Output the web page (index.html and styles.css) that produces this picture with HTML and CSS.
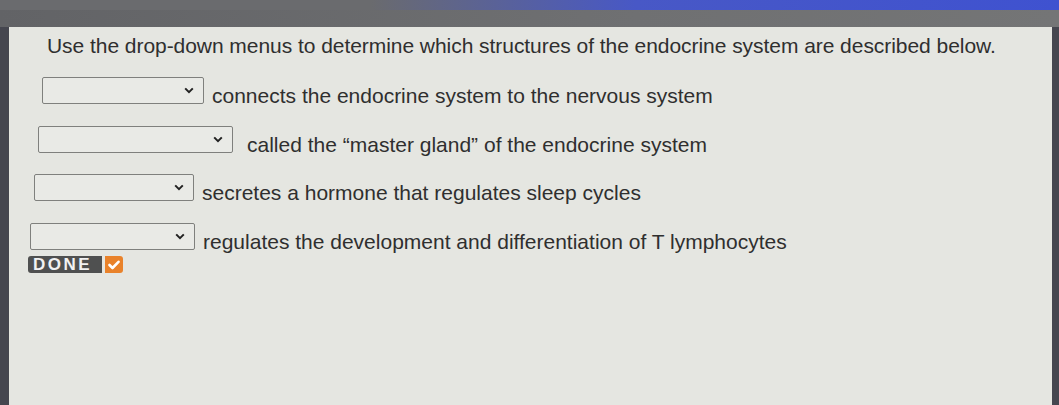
FILE: index.html
```html
<!DOCTYPE html>
<html lang="en">
<head>
    <meta charset="UTF-8">
    <meta name="viewport" content="width=device-width, initial-scale=1.0">
    <title>Endocrine System</title>
    <link rel="stylesheet" href="styles.css">
</head>
<body>
<div class="topbar"></div>
<div class="subbar"></div>
<div class="panel">
    <p class="intro">Use the drop-down menus to determine which structures of the endocrine system are described below.</p>

    <div class="row r1">
        <select class="pick w1"><option></option></select>
        <span>connects the endocrine system to the nervous system</span>
    </div>
    <div class="row r2">
        <select class="pick w2"><option></option></select>
        <span>called the “master gland” of the endocrine system</span>
    </div>
    <div class="row r3">
        <select class="pick w3"><option></option></select>
        <span>secretes a hormone that regulates sleep cycles</span>
    </div>
    <div class="row r4">
        <select class="pick w4"><option></option></select>
        <span>regulates the development and differentiation of T lymphocytes</span>
    </div>

    <div class="done">
        <span class="done-text">DONE</span>
        <span class="done-check">
            <svg width="12" height="10" viewBox="0 0 12 10"><path d="M1.5 5 L4.5 8 L10.5 1.8" fill="none" stroke="#fff" stroke-width="2.6" stroke-linecap="round" stroke-linejoin="round"/></svg>
        </span>
    </div>
</div>
</body>
</html>
```

FILE: styles.css
```css
/* Layout dasar */
body {
    margin: 0;
    background: #45464f;
    font-family: "Liberation Sans", Arial, sans-serif;
    color: #2f2f2f;
    height: 405px;
    overflow: hidden;
}

.topbar {
    height: 10px;
    background: linear-gradient(to right, #6a6b6e 0%, #6a6b6e 35%, #4858c6 60%, #3f52d0 100%);
}

.subbar {
    height: 17px;
    background: linear-gradient(to right, #626366, #6f7072 60%, #747576);
}

.panel {
    margin: 0 7px 0 9px;
    height: 378px;
    background: #e5e6e1;
    overflow: hidden;
}

.intro {
    margin: 0;
    padding: 7px 0 0 38px;
    font-size: 21px;
    line-height: 24px;
    letter-spacing: -0.05px;
}

.row {
    display: flex;
    align-items: flex-start;
    gap: 8px;
    font-size: 21px;
}

.row span {
    line-height: 27px;
    padding-top: 5px;
}

.r1 { margin: 19px 0 0 33px; }
.r2 { margin: 17px 0 0 29px; gap: 14px; }
.r3 { margin: 16px 0 0 25px; }
.r4 { margin: 17px 0 0 21px; }

.pick {
    appearance: none;
    height: 27px;
    border: 1px solid #7f807d;
    border-radius: 2px;
    background: #e9eae6;
    background-image: url("data:image/svg+xml,%3Csvg xmlns='http://www.w3.org/2000/svg' width='10' height='7'%3E%3Cpath d='M1.2 1.4 L5 5.2 L8.8 1.4' fill='none' stroke='%23222' stroke-width='2'/%3E%3C/svg%3E");
    background-repeat: no-repeat;
    background-position: right 9px center;
}

.w1 { width: 162px; }
.w2 { width: 195px; }
.w3 { width: 160px; }
.w4 { width: 165px; }

.done {
    display: inline-flex;
    margin: 1px 0 0 19px;
    height: 17px;
    border-radius: 3px;
    overflow: hidden;
}

.done-text {
    width: 74px;
    box-sizing: border-box;
    background: #4f5050;
    color: #f2f2f2;
    font-weight: bold;
    font-size: 17px;
    letter-spacing: 2.5px;
    line-height: 18px;
    padding-left: 5px;
}

.done-check {
    background: #e9822a;
    width: 18px;
    display: flex;
    align-items: center;
    justify-content: center;
    border-left: 3px solid #e5e6e1;
}
```
